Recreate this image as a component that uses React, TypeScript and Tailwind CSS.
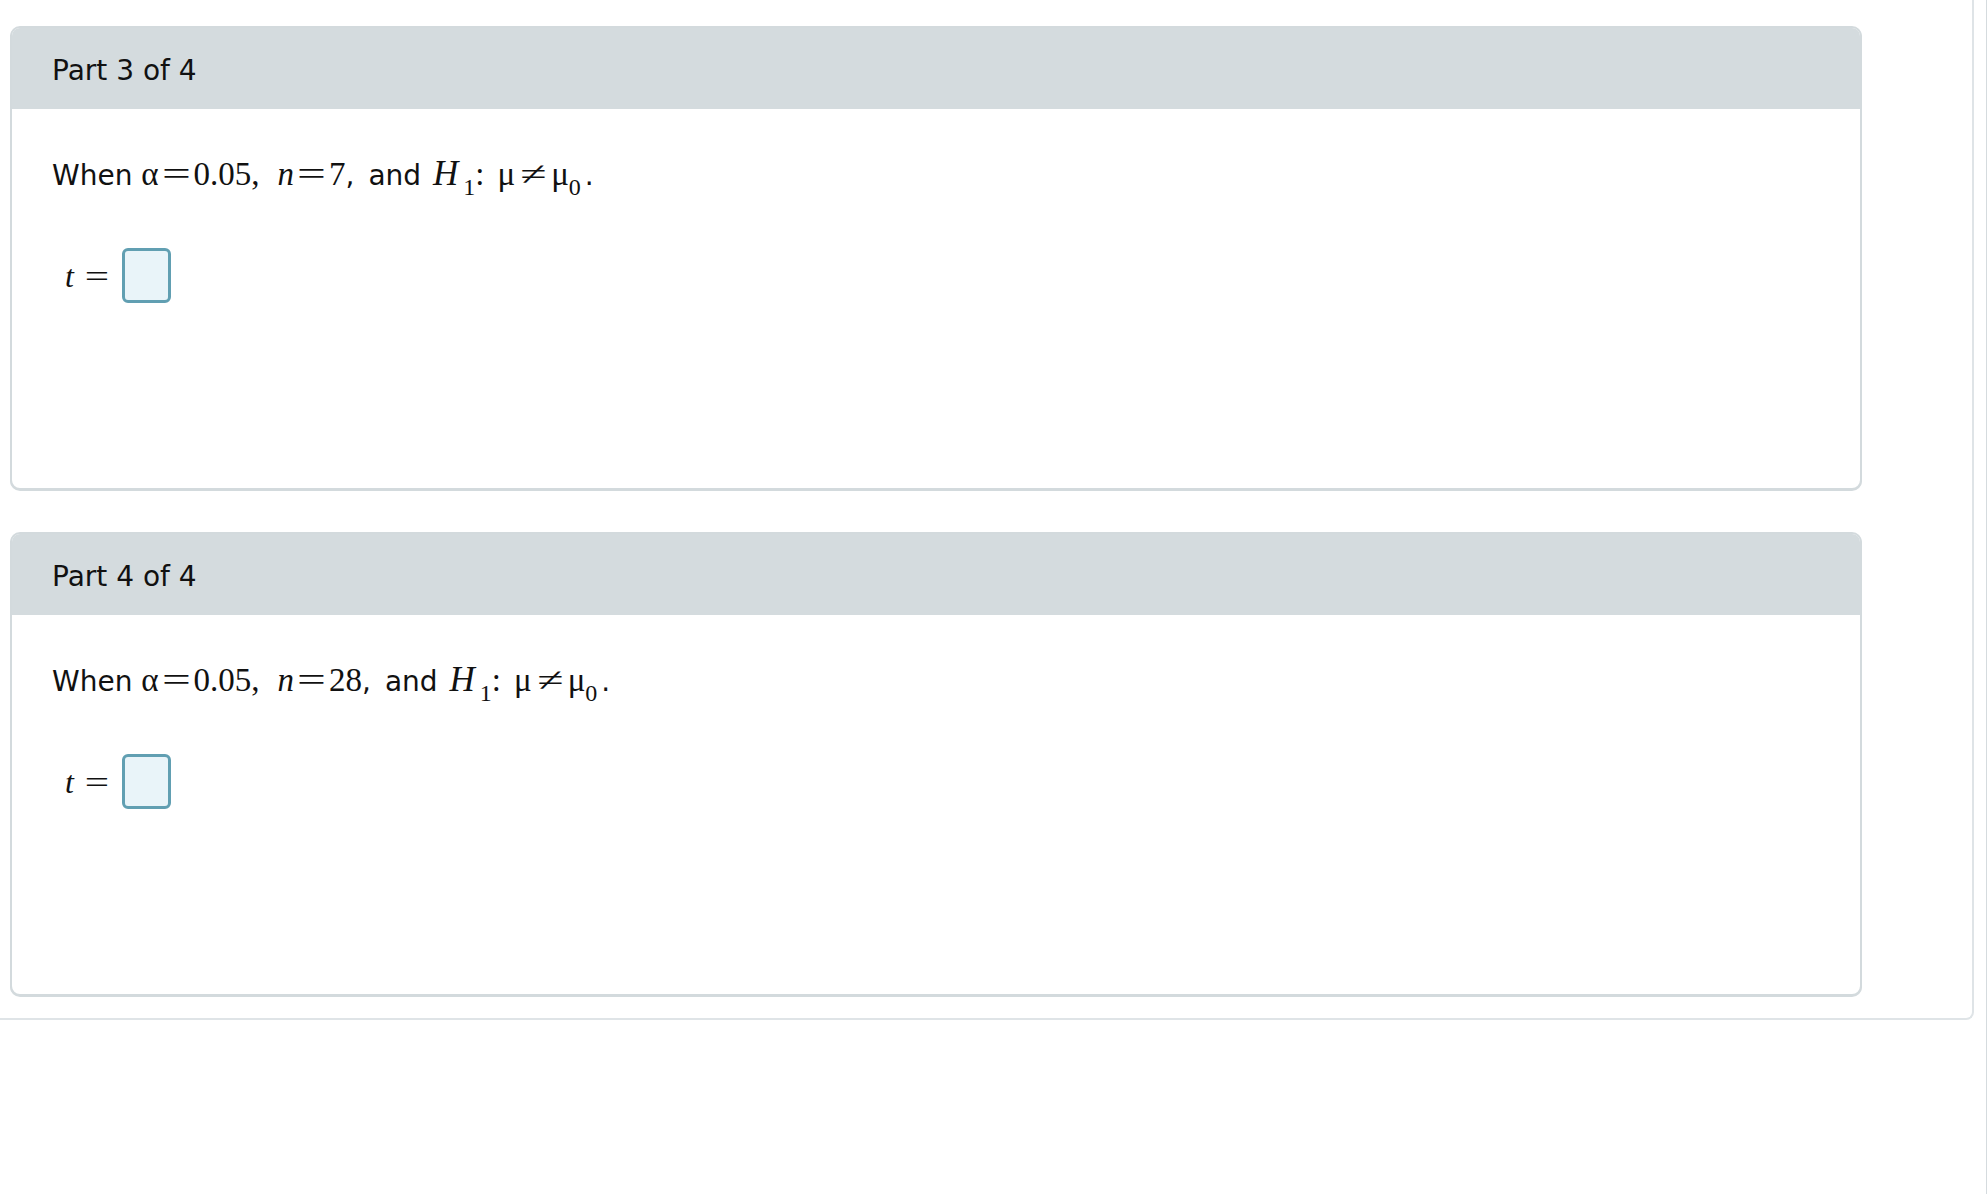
const sans = { fontFamily: '"DejaVu Sans", Verdana, sans-serif' };
const serif = { fontFamily: '"Liberation Serif", "Times New Roman", serif' };

const parts = [
  { label: "Part 3 of 4", n: "7" },
  { label: "Part 4 of 4", n: "28" },
];

// relation sign set a little wider, the way the math renderer draws it
function Rel({ sign, w, s = "scale-x-[1.55]" }: { sign: string; w: string; s?: string }) {
  return (
    <span className={`inline-block text-center ${w}`}>
      <span className={`inline-block ${s}`}>{sign}</span>
    </span>
  );
}

function Sub({ children, ml = "" }: { children: React.ReactNode; ml?: string }) {
  return <span className={`relative top-[10px] text-[24px] ${ml}`}>{children}</span>;
}

function Question({ n }: { n: string }) {
  return (
    <p className="text-[28px] leading-[40px] text-[#111]" style={sans}>
      When{" "}
      <span className="text-[33px]" style={serif}>
        α
        <Rel sign="=" w="w-[35px]" />
        0.05,
        <span className="ml-[18px] italic">n</span>
        <Rel sign="=" w="w-[35px]" />
        {n}
      </span>
      ,<span className="ml-[5px]"> and </span>
      <span className="text-[33px]" style={serif}>
        <span className="ml-[3px] text-[35px] italic">H</span>
        <Sub ml="ml-[5px]">1</Sub>:<span className="ml-[13px]">μ</span>
        <Rel sign="≠" w="w-[36px]" s="scale-x-[1.45]" />
        μ<Sub>0</Sub>
      </span>
      <span className="ml-[4px]">.</span>
    </p>
  );
}

function Card({ label, n }: { label: string; n: string }) {
  return (
    <div className="overflow-hidden rounded-[10px] border-2 border-[#d3dadd] bg-white shadow-[0_1px_0_#d3dadd]">
      <div className="flex h-[81px] items-center bg-[#d4dbde] pl-[40px] pt-[5px]">
        <span className="text-[28px] text-[#111]" style={sans}>
          {label}
        </span>
      </div>
      <div className="h-[379px] pl-[40px] pt-[45px]">
        <Question n={n} />
        <div className="mt-[51px] flex h-[55px] items-center pl-[13px] text-[32px] text-[#111]" style={serif}>
          <span className="italic">t</span>
          <Rel sign="=" w="w-[47px]" s="scale-x-[1.35]" />
          <div className="ml-px h-[55px] w-[49px] rounded-[6px] border-[3px] border-[#619fb2] bg-[#e9f4f9]" />
        </div>
      </div>
    </div>
  );
}

export default function App() {
  return (
    <div className="flex h-[1194px] w-[1988px] bg-white">
      <div className="h-[1020px] w-[1974px] rounded-br-[8px] border-r-2 border-b-2 border-[#dfe4e7] pl-[10px] pr-[110px] pt-[26px]">
        <div className="flex flex-col gap-[42px]">
          {parts.map((p) => (
            <Card key={p.label} label={p.label} n={p.n} />
          ))}
        </div>
      </div>
      <div className="ml-[12px] h-full w-px bg-[#d5dbde]" />
    </div>
  );
}
